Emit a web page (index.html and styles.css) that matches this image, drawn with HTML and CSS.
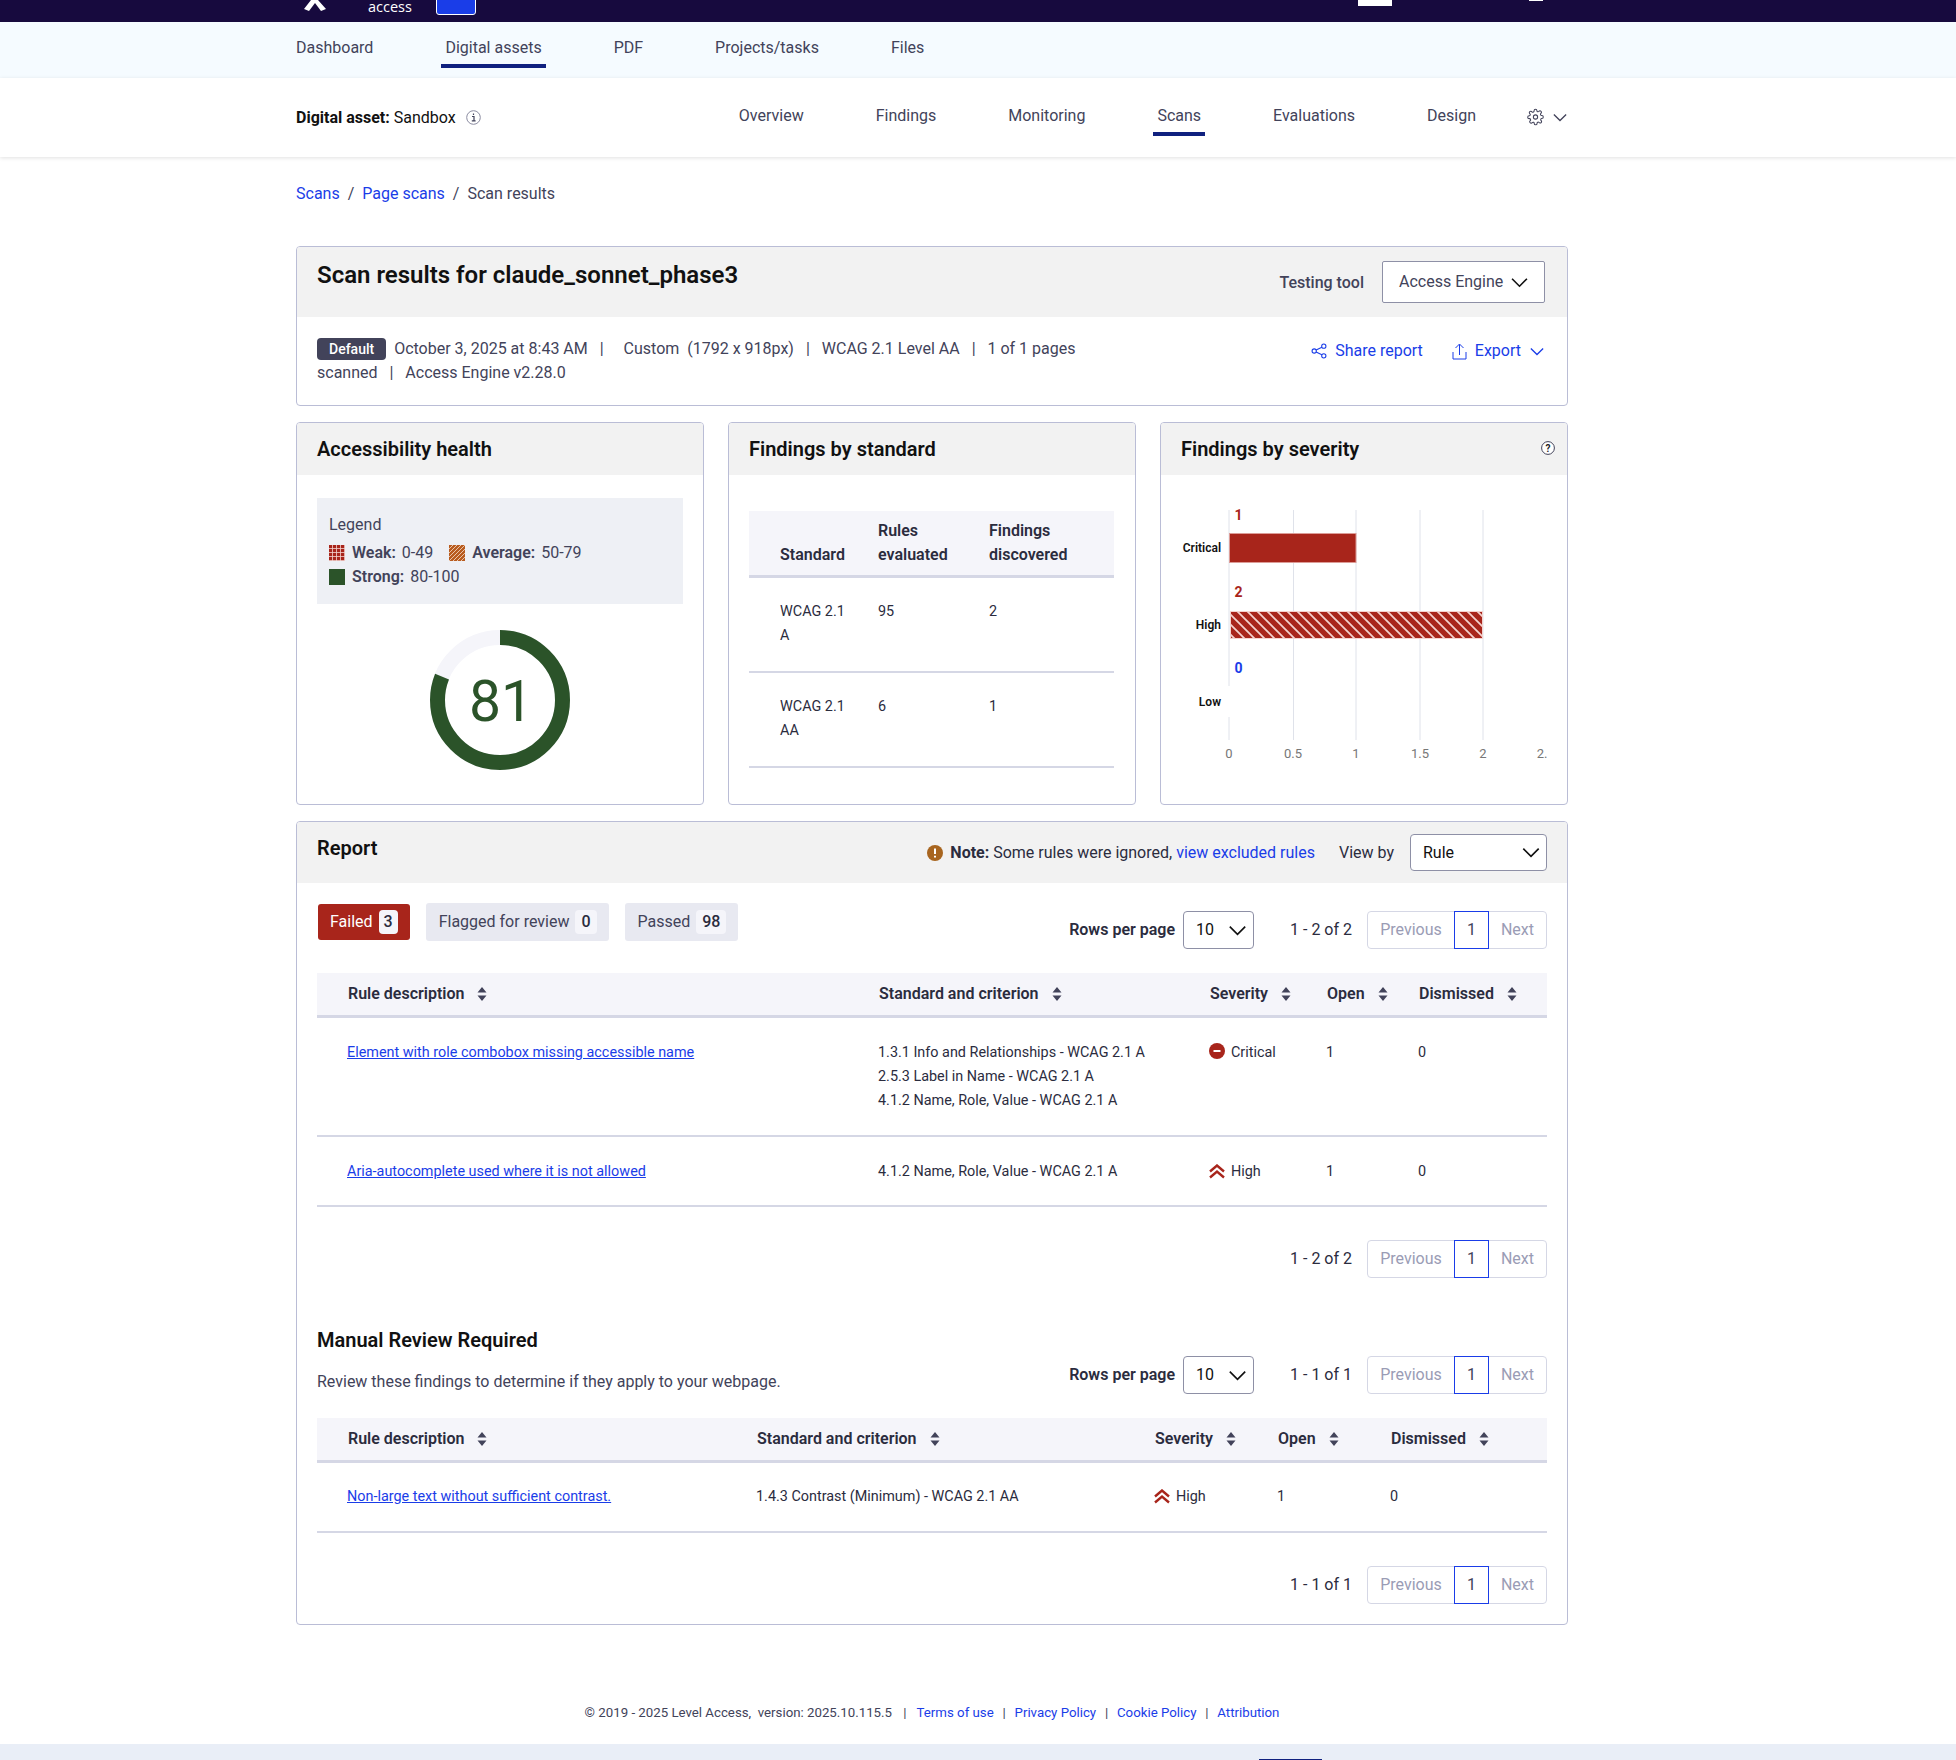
FILE: index.html
```html
<!DOCTYPE html>
<html lang="en">
<head>
    <meta charset="UTF-8">
    <title>Scan results</title>
    <link rel="stylesheet" href="styles.css">
</head>
<body>
<svg class="defs" width="0" height="0" aria-hidden="true">
    <defs>
        <symbol id="sort" viewBox="0 0 10 14"><path d="M5 0l4.500 5.500H.5zM5 14L.5 8.500h9z"/></symbol>
        <symbol id="chev" viewBox="0 0 16 10"><path d="M1 1.500l7 7 7-7" fill="none" stroke="currentColor" stroke-width="1.500"/></symbol>
        <symbol id="high" viewBox="0 0 16 15"><path d="M1 7.500L8 1.500l7 6M1 13.500l7-6 7 6" fill="none" stroke="#a8251b" stroke-width="2.400"/></symbol>
        <pattern id="hatch-high" patternUnits="userSpaceOnUse" width="10" height="10">
            <rect width="10" height="10" fill="#a8251b"/>
            <path d="M-1-1L11 11M-1 9L1 11M9-1L11 1" stroke="#f3d3cf" stroke-width="1.700"/>
        </pattern>
        <pattern id="hatch-weak" patternUnits="userSpaceOnUse" width="4" height="4">
            <rect width="4" height="4" fill="#a8251b"/>
            <path d="M3.500 0v4M0 3.500h4" stroke="#f3d3cf" stroke-width=".8"/>
        </pattern>
        <pattern id="hatch-avg" patternUnits="userSpaceOnUse" width="4" height="4">
            <rect width="4" height="4" fill="#b85c1f"/>
            <path d="M-1 1L1-1M-1 5L5-1M3 5L5 3" stroke="#f6e0cf" stroke-width=".8"/>
        </pattern>
    </defs>
</svg>

<header class="topbar">
    <svg class="logo-mark" width="22" height="11" viewBox="0 0 22 11"><path d="M7 0h7l8 9-5 2-6-8-6 8-5-2z" fill="#fff"/></svg>
    <span class="logo-text">access</span>
    <span class="top-btn"></span>
    <span class="top-box"></span>
    <span class="top-sliver"></span>
</header>

<nav class="subnav">
    <div class="wrap subnav-row">
        <a class="nav-link">Dashboard</a>
        <a class="nav-link active">Digital assets</a>
        <a class="nav-link">PDF</a>
        <a class="nav-link">Projects/tasks</a>
        <a class="nav-link">Files</a>
    </div>
</nav>

<nav class="assetnav">
    <div class="wrap assetnav-row">
        <div class="asset-name">
            <b>Digital asset:</b> Sandbox
            <svg class="info-icon" width="15" height="15" viewBox="0 0 15 15"><circle cx="7.500" cy="7.500" r="6.800" fill="none" stroke="#8a8ba0"/><path d="M6 6.500h2v4.200M5.800 10.800h3.800M7.500 3.500v1.500" fill="none" stroke="#42435a" stroke-width="1.200"/></svg>
        </div>
        <div class="asset-links">
            <a class="nav-link">Overview</a>
            <a class="nav-link">Findings</a>
            <a class="nav-link">Monitoring</a>
            <a class="nav-link active">Scans</a>
            <a class="nav-link">Evaluations</a>
            <a class="nav-link">Design</a>
        </div>
        <div class="asset-tools">
            <svg width="17" height="20" viewBox="0 0 24 24" fill="none" stroke="#42435a" stroke-width="1.500"><circle cx="12" cy="12" r="3"/><path d="M19.400 15a1.600 1.600 0 0 0 .3 1.800l.1.1a2 2 0 1 1-2.800 2.800l-.1-.1a1.600 1.600 0 0 0-2.700 1.100V21a2 2 0 1 1-4 0v-.1a1.600 1.600 0 0 0-2.700-1.100l-.1.100a2 2 0 1 1-2.800-2.800l.1-.1a1.600 1.600 0 0 0-1.100-2.700H3a2 2 0 1 1 0-4h.1a1.600 1.600 0 0 0 1.100-2.700l-.1-.1a2 2 0 1 1 2.800-2.800l.1.1a1.600 1.600 0 0 0 1.800.3H9a1.600 1.600 0 0 0 1-1.500V3a2 2 0 1 1 4 0v.1a1.600 1.600 0 0 0 2.700 1.100l.1-.1a2 2 0 1 1 2.800 2.800l-.1.1a1.600 1.600 0 0 0-.3 1.800V9a1.600 1.600 0 0 0 1.500 1H21a2 2 0 1 1 0 4h-.1a1.600 1.600 0 0 0-1.500 1z"/></svg>
            <svg class="tool-chev" width="14" height="9"><use href="#chev"/></svg>
        </div>
    </div>
</nav>

<main class="wrap">
    <div class="crumbs">
        <a>Scans</a><span class="sep">/</span><a>Page scans</a><span class="sep">/</span><span>Scan results</span>
    </div>

    <section class="card">
        <div class="card-head scan-head">
            <h1>Scan results for claude_sonnet_phase3</h1>
            <div class="tool-pick">
                <span class="strong-label tool-label">Testing tool</span>
                <span class="select tool-select">Access Engine <svg width="17" height="11"><use href="#chev"/></svg></span>
            </div>
        </div>
        <div class="scan-meta">
            <div class="meta-text">
                <div><span class="badge">Default</span> October 3, 2025 at 8:43 AM <i class="wide">|</i> Custom&nbsp; (1792 x 918px) <i>|</i> WCAG 2.1 Level AA <i>|</i> 1 of 1 pages</div>
                <div>scanned <i>|</i> Access Engine v2.28.0</div>
            </div>
            <div class="meta-actions">
                <a class="action">
                    <svg width="16" height="16" viewBox="0 0 15 15" fill="none" stroke="#1a3de8"><circle cx="3" cy="7.500" r="2"/><circle cx="12" cy="3" r="2"/><circle cx="12" cy="12" r="2"/><path d="M4.800 6.500l5.400-2.600M4.800 8.500l5.400 2.600"/></svg>
                    Share report
                </a>
                <a class="action">
                    <svg width="15" height="17" viewBox="0 0 15 17" fill="none" stroke="#1a3de8"><path d="M7.500 12V1.500M3.500 5l4-4 4 4M1 9v7h13V9"/></svg>
                    Export
                    <svg class="action-chev" width="14" height="9"><use href="#chev"/></svg>
                </a>
            </div>
        </div>
    </section>

    <div class="summary">
        <section class="card">
            <div class="card-head small-head"><h2>Accessibility health</h2></div>
            <div class="health-body">
                <div class="legend">
                    <div class="legend-title">Legend</div>
                    <div class="legend-row">
                        <svg width="16" height="16"><rect width="16" height="16" fill="url(#hatch-weak)"/></svg>
                        <b>Weak:</b> 0-49
                        <svg class="legend-gap" width="16" height="16"><rect width="16" height="16" fill="url(#hatch-avg)"/></svg>
                        <b>Average:</b> 50-79
                    </div>
                    <div class="legend-row">
                        <svg width="16" height="16"><rect width="16" height="16" fill="#2b5329"/></svg>
                        <b>Strong:</b> 80-100
                    </div>
                </div>
                <svg class="donut" width="140" height="140" viewBox="0 0 140 140">
                    <circle cx="70" cy="70" r="62.500" fill="none" stroke="#f5f5fa" stroke-width="15"/>
                    <circle cx="70" cy="70" r="62.500" fill="none" stroke="#2b5329" stroke-width="15" stroke-dasharray="318 393" transform="rotate(-90 70 70)"/>
                    <text x="71" y="91" text-anchor="middle" class="donut-num">81</text>
                </svg>
            </div>
        </section>

        <section class="card">
            <div class="card-head small-head"><h2>Findings by standard</h2></div>
            <div class="standard-body">
                <table class="grid standard-table">
                    <colgroup><col class="s1"><col class="s2"><col class="s3"></colgroup>
                    <thead><tr><th>Standard</th><th>Rules evaluated</th><th>Findings discovered</th></tr></thead>
                    <tbody>
                        <tr><td>WCAG 2.1 A</td><td>95</td><td>2</td></tr>
                        <tr><td>WCAG 2.1 AA</td><td>6</td><td>1</td></tr>
                    </tbody>
                </table>
            </div>
        </section>

        <section class="card">
            <div class="card-head small-head severity-head">
                <h2>Findings by severity</h2>
                <svg width="14" height="14" viewBox="0 0 14 14"><circle cx="7" cy="7" r="6.400" fill="#fff" stroke="#42435a"/><text x="7" y="10.500" text-anchor="middle" class="help-mark">?</text></svg>
            </div>
            <svg class="chart" width="406" height="320" viewBox="0 0 406 320">
                <g stroke="#dfe2ea">
                    <path d="M68 35V265M132.500 35V265M195 35V265M259 35V265M322 35V265"/>
                </g>
                <rect x="64" y="211" width="8" height="31" fill="#fff"/>
                <rect x="68.500" y="58.500" width="126.500" height="29" fill="#a8251b" stroke="#dc9c97"/>
                <rect x="69.500" y="136.500" width="252" height="27" fill="url(#hatch-high)" stroke="#f3d3cf"/>
                <g class="chart-cat" text-anchor="end">
                    <text x="60" y="77">Critical</text>
                    <text x="60" y="154">High</text>
                    <text x="60" y="231">Low</text>
                </g>
                <g class="chart-num">
                    <text x="73.500" y="45" fill="#a8251b">1</text>
                    <text x="73.500" y="122" fill="#a8251b">2</text>
                    <text x="73.500" y="198" fill="#1a3de8">0</text>
                </g>
                <g class="chart-axis" text-anchor="middle">
                    <text x="68" y="283">0</text>
                    <text x="132" y="283">0.5</text>
                    <text x="195" y="283">1</text>
                    <text x="259" y="283">1.5</text>
                    <text x="322" y="283">2</text>
                    <text x="381" y="283">2.</text>
                </g>
            </svg>
        </section>
    </div>

    <section class="card report">
        <div class="card-head report-head">
            <h2>Report</h2>
            <div class="report-tools">
                <svg width="16" height="16" viewBox="0 0 16 16"><circle cx="8" cy="8" r="8" fill="#a8651f"/><path d="M8 3.500v5.500M8 10.800v1.800" stroke="#fff" stroke-width="2"/></svg>
                <span class="note"><b>Note:</b> Some rules were ignored, <a>view excluded rules</a></span>
                <span class="view-label">View by</span>
                <span class="select view-select">Rule <svg width="18" height="11"><use href="#chev"/></svg></span>
            </div>
        </div>
        <div class="report-body">
            <div class="tabs-row">
                <div class="tabs">
                    <span class="tab failed">Failed <em>3</em></span>
                    <span class="tab">Flagged for review <em>0</em></span>
                    <span class="tab">Passed <em>98</em></span>
                </div>
                <div class="pager-row">
                    <span class="strong-label">Rows per page</span>
                    <span class="select rows-select">10 <svg width="19" height="11"><use href="#chev"/></svg></span>
                    <span class="count rows-count">1 - 2 of 2</span>
                    <div class="pager"><span>Previous</span><span class="current">1</span><span>Next</span></div>
                </div>
            </div>

            <table class="grid rules-table failed-table">
                <colgroup><col class="r1"><col class="r2"><col class="r3"><col class="r4"><col class="r5"></colgroup>
                <thead>
                    <tr>
                        <th>Rule description <svg class="sort" width="10" height="14"><use href="#sort"/></svg></th>
                        <th>Standard and criterion <svg class="sort" width="10" height="14"><use href="#sort"/></svg></th>
                        <th>Severity <svg class="sort" width="10" height="14"><use href="#sort"/></svg></th>
                        <th>Open <svg class="sort" width="10" height="14"><use href="#sort"/></svg></th>
                        <th>Dismissed <svg class="sort" width="10" height="14"><use href="#sort"/></svg></th>
                    </tr>
                </thead>
                <tbody>
                    <tr>
                        <td><a class="rule-link">Element with role combobox missing accessible name</a></td>
                        <td>1.3.1 Info and Relationships - WCAG 2.1 A<br>2.5.3 Label in Name - WCAG 2.1 A<br>4.1.2 Name, Role, Value - WCAG 2.1 A</td>
                        <td><span class="sev sev-critical"><svg width="16" height="16" viewBox="0 0 16 16"><circle cx="8" cy="8" r="8" fill="#a8251b"/><path d="M4.500 8h7" stroke="#fff" stroke-width="2"/></svg>Critical</span></td>
                        <td>1</td>
                        <td>0</td>
                    </tr>
                    <tr>
                        <td><a class="rule-link">Aria-autocomplete used where it is not allowed</a></td>
                        <td>4.1.2 Name, Role, Value - WCAG 2.1 A</td>
                        <td><span class="sev"><svg width="16" height="15"><use href="#high"/></svg>High</span></td>
                        <td>1</td>
                        <td>0</td>
                    </tr>
                </tbody>
            </table>
            <div class="pager-row pager-end">
                <span class="count">1 - 2 of 2</span>
                <div class="pager"><span>Previous</span><span class="current">1</span><span>Next</span></div>
            </div>

            <div class="review-head">
                <div>
                    <h2>Manual Review Required</h2>
                    <p class="review-text">Review these findings to determine if they apply to your webpage.</p>
                </div>
                <div class="pager-row">
                    <span class="strong-label">Rows per page</span>
                    <span class="select rows-select">10 <svg width="19" height="11"><use href="#chev"/></svg></span>
                    <span class="count rows-count">1 - 1 of 1</span>
                    <div class="pager"><span>Previous</span><span class="current">1</span><span>Next</span></div>
                </div>
            </div>

            <table class="grid rules-table manual-table">
                <colgroup><col class="m1"><col class="m2"><col class="m3"><col class="m4"><col class="m5"></colgroup>
                <thead>
                    <tr>
                        <th>Rule description <svg class="sort" width="10" height="14"><use href="#sort"/></svg></th>
                        <th>Standard and criterion <svg class="sort" width="10" height="14"><use href="#sort"/></svg></th>
                        <th>Severity <svg class="sort" width="10" height="14"><use href="#sort"/></svg></th>
                        <th>Open <svg class="sort" width="10" height="14"><use href="#sort"/></svg></th>
                        <th>Dismissed <svg class="sort" width="10" height="14"><use href="#sort"/></svg></th>
                    </tr>
                </thead>
                <tbody>
                    <tr>
                        <td><a class="rule-link">Non-large text without sufficient contrast.</a></td>
                        <td>1.4.3 Contrast (Minimum) - WCAG 2.1 AA</td>
                        <td><span class="sev"><svg width="16" height="15"><use href="#high"/></svg>High</span></td>
                        <td>1</td>
                        <td>0</td>
                    </tr>
                </tbody>
            </table>
            <div class="pager-row pager-end">
                <span class="count">1 - 1 of 1</span>
                <div class="pager"><span>Previous</span><span class="current">1</span><span>Next</span></div>
            </div>
        </div>
    </section>

    <footer class="foot">
        &copy; 2019 - 2025 Level Access,&nbsp; version: 2025.10.115.5 <i class="gap">|</i> <a>Terms of use</a> <i>|</i> <a>Privacy Policy</a> <i>|</i> <a>Cookie Policy</a> <i>|</i> <a>Attribution</a>
    </footer>
</main>

<div class="bottom-band"><span class="band-tab"></span></div>
</body>
</html>
```

FILE: styles.css
```css
html {
    height: 1760px;
    overflow: hidden;
}

body {
    margin: 0;
    height: 1760px;
    overflow: hidden;
    position: relative;
    font-family: Roboto, "Liberation Sans", sans-serif;
    font-size: 16px;
    line-height: 24px;
    color: #42435a;
    background: #fff;
}

a {
    color: #1a3de8;
}

b {
    font-weight: 500;
}

.defs {
    position: absolute;
}

.wrap {
    width: 1272px;
    margin-left: 296px;
}

/* top bar, cut off by the top of the shot */
.topbar {
    height: 22px;
    background: #170a3e;
    position: relative;
    overflow: hidden;
}

.logo-mark {
    position: absolute;
    left: 304px;
    top: 0;
}

.logo-text {
    position: absolute;
    left: 368px;
    top: 1px;
    font-family: "Open Sans", sans-serif;
    font-size: 14.500px;
    line-height: 12px;
    color: #fff;
}

.top-btn {
    position: absolute;
    left: 436px;
    top: -4px;
    width: 38px;
    height: 17px;
    background: #1a3de8;
    border: 1px solid #fff;
    border-radius: 3px;
}

.top-box {
    position: absolute;
    left: 1358px;
    top: 0;
    width: 34px;
    height: 6px;
    background: #fff;
}

.top-sliver {
    position: absolute;
    left: 1529px;
    top: 0;
    width: 14px;
    height: 1px;
    background: #fff;
}

/* navs */
.subnav {
    height: 56px;
    background: #f5fbff;
}

.subnav-row {
    display: flex;
    gap: 64px;
    height: 100%;
}

.nav-link {
    display: flex;
    align-items: center;
    padding: 0 4px;
    margin-left: -4px;
    margin-right: 4px;
    color: #42435a;
    border-bottom: 4px solid transparent;
    box-sizing: border-box;
}

.subnav-row .nav-link {
    height: 46px;
    padding-top: 10px;
}

.subnav-row .nav-link.active,
.asset-links .nav-link.active {
    border-bottom-color: #10217f;
}

.assetnav {
    height: 79px;
    background: #fff;
    box-shadow: 0 1px 4px rgba(0, 0, 0, .12);
    position: relative;
}

.assetnav-row {
    display: flex;
    align-items: flex-start;
    height: 100%;
}

.asset-name {
    margin-top: 28px;
    color: #111;
}

.asset-name b {
    font-weight: 700;
}

.info-icon {
    margin-left: 6px;
    vertical-align: -2px;
}

.asset-links {
    display: flex;
    gap: 64px;
    margin-left: auto;
    height: 58px;
}

.asset-links .nav-link {
    padding-top: 22px;
    padding-bottom: 0;
    height: 58px;
    box-sizing: border-box;
}

.asset-tools {
    display: flex;
    align-items: center;
    margin: 29px 1px 0 43px;
    height: 20px;
    color: #42435a;
}

.tool-chev {
    margin-left: 9px;
}

.crumbs {
    margin-top: 25px;
    height: 24px;
    margin-bottom: 40px;
}

.sep {
    margin: 0 8px;
}

/* cards */
.card {
    border: 1px solid #babdd6;
    border-radius: 4px;
    background: #fff;
    box-sizing: border-box;
    overflow: hidden;
}

.card-head {
    background: #f2f2f2;
    padding: 0 20px;
}

h1 {
    margin: 0;
    font-size: 24px;
    line-height: 32px;
    font-weight: 600;
    color: #111;
}

h2 {
    margin: 0;
    font-size: 20px;
    line-height: 28px;
    font-weight: 600;
    color: #111;
}

.scan-head {
    height: 70px;
    display: flex;
    justify-content: space-between;
    padding-top: 12px;
    box-sizing: border-box;
    padding-right: 22px;
}

.tool-pick {
    display: flex;
    align-items: center;
    gap: 18px;
    height: 42px;
    margin-top: 2px;
}

.strong-label {
    font-weight: 600;
    color: #2b2c3e;
}

.tool-label {
    font-weight: 500;
    color: #42435a;
    padding-top: 2px;
}

.select {
    display: flex;
    align-items: center;
    justify-content: space-between;
    box-sizing: border-box;
    background: #fff;
    border: 1px solid #8e90a6;
    border-radius: 2px;
    color: #111;
}

.tool-select {
    width: 163px;
    height: 42px;
    padding: 0 16px;
    color: #42435a;
}

.tool-select svg {
    color: #111;
}

.scan-meta {
    height: 88px;
    padding: 20px 23px 0 20px;
    box-sizing: border-box;
    display: flex;
    justify-content: space-between;
}

.meta-text {
    width: 800px;
}

.meta-text i {
    font-style: normal;
    margin: 0 8px;
}

.meta-text i.wide {
    margin-right: 16px;
}

.badge {
    display: inline-block;
    background: #42435a;
    color: #fff;
    font-size: 14px;
    font-weight: 500;
    line-height: 22px;
    padding: 0 12px;
    border-radius: 4px;
    margin-right: 4px;
}

.meta-actions {
    display: flex;
    gap: 29px;
    height: 24px;
    margin-top: 2px;
}

.action {
    display: flex;
    align-items: center;
    gap: 8px;
}

.action-chev {
    margin-left: 1px;
}

.summary {
    display: grid;
    grid-template-columns: 408px 408px 408px;
    gap: 24px;
    margin-top: 16px;
    height: 383px;
}

.small-head {
    height: 52px;
    display: flex;
    align-items: center;
    box-sizing: border-box;
}

.severity-head {
    justify-content: space-between;
    padding-right: 12px;
}

.severity-head svg {
    margin-top: -2px;
}

.help-mark {
    font-size: 10px;
    font-weight: 700;
    fill: #222;
}

.health-body {
    padding: 23px 20px 0;
    display: flex;
    flex-direction: column;
    align-items: center;
}

.legend {
    width: 100%;
    box-sizing: border-box;
    height: 106px;
    background: #eef0f5;
    padding: 15px 12px 0;
}

.legend-row {
    display: flex;
    align-items: center;
    gap: 7px;
}

.legend-title {
    height: 28px;
}

.legend-row b {
    font-weight: 600;
    margin-right: -1px;
}

.legend-gap {
    margin-left: 9px;
}

.donut {
    margin-top: 26px;
}

.donut-num {
    font-size: 57px;
    fill: #2b5329;
}

.standard-body {
    padding: 36px 21px 0 20px;
}

/* tables */
.grid {
    width: 100%;
    border-collapse: collapse;
    table-layout: fixed;
    font-size: 14.400px;
    line-height: 24px;
    color: #2b2c3e;
}

.grid th {
    background: #f5f5fa;
    border-bottom: 3px solid #d5d7e5;
    text-align: left;
    font-weight: 600;
    font-size: 16px;
    vertical-align: bottom;
    padding: 0;
    color: #2b2c3e;
}

.grid td {
    border-bottom: 2px solid #d5d7e5;
    padding: 0;
    vertical-align: top;
}

.standard-table th {
    padding: 8px 12px 8px 0;
}

.standard-table td {
    padding: 22px 16px 23px 0;
}

.standard-table th:first-child,
.standard-table td:first-child {
    padding-left: 31px;
    padding-right: 28px;
}

.s1 { width: 129px; }
.s2 { width: 111px; }

.rules-table th {
    height: 42px;
    vertical-align: middle;
    padding-left: 1px;
}

.rules-table td {
    padding-top: 22px;
    padding-bottom: 22px;
}

.failed-table td {
    padding-top: 23px;
}

.failed-table tr:last-child td {
    padding-bottom: 21px;
}

.rules-table th:first-child {
    padding-left: 31px;
}

.rules-table td:first-child {
    padding-left: 30px;
}

.r1 { width: 561px; }
.r2 { width: 331px; }
.r3 { width: 117px; }
.r4 { width: 92px; }

.m1 { width: 439px; }
.m2 { width: 398px; }
.m3 { width: 123px; }
.m4 { width: 113px; }

.sort {
    fill: #42435a;
    margin-left: 9px;
    vertical-align: -2px;
}

.rule-link {
    text-decoration: underline;
}

.sev {
    display: flex;
    align-items: center;
    gap: 6px;
}

.sev svg {
    margin-top: -2px;
}

.sev-critical svg {
    margin-top: -4px;
}

.chart {
    display: block;
    font-family: Roboto, sans-serif;
}

.chart-cat {
    font-size: 12px;
    font-weight: 600;
    fill: #111;
}

.chart-num {
    font-size: 14px;
    font-weight: 700;
}

.chart-axis {
    font-size: 13px;
    fill: #777;
}

/* report */
.report {
    margin-top: 16px;
    height: 804px;
}

.report-head {
    height: 61px;
    display: flex;
    justify-content: space-between;
    padding-top: 12px;
    padding-right: 20px;
    box-sizing: border-box;
}

.report-tools {
    display: flex;
    align-items: center;
    height: 37px;
}

.note {
    margin-left: 7px;
    color: #2b2c3e;
}

.note b {
    font-weight: 700;
}

.view-label {
    margin-left: 24px;
    color: #2b2c3e;
}

.view-select {
    width: 137px;
    height: 37px;
    margin-left: 16px;
    padding: 0 6px 0 12px;
    border-radius: 4px;
}

.report-body {
    padding: 20px 20px 0;
}

.tabs-row {
    display: flex;
    justify-content: space-between;
    align-items: flex-start;
    height: 46px;
    margin-bottom: 24px;
}

.tabs {
    display: flex;
    gap: 16px;
    padding-left: 1px;
}

.tab {
    display: flex;
    align-items: center;
    height: 38px;
    padding: 0 12px 0 13px;
    box-sizing: border-box;
    background: #e8e9f1;
    border-radius: 3px;
    font-size: 16px;
    gap: 6px;
    color: #42435a;
}

.tab em {
    font-style: normal;
    font-weight: 500;
    background: #f5f5fa;
    color: #2b2c3e;
    padding: 0 6px;
    border-radius: 4px;
    line-height: 24px;
}

.tab.failed {
    background: #a8251b;
    color: #fff;
    padding: 0 12px 0 12px;
    height: 36px;
    margin-top: 1px;
}

.tab.failed em {
    padding: 0 5px;
}

.pager-row {
    display: flex;
    align-items: center;
    justify-content: flex-end;
    margin-top: 8px;
}

.rows-select {
    width: 71px;
    height: 38px;
    margin-left: 8px;
    padding: 0 6px 0 12px;
    border-radius: 4px;
}

.count {
    margin-right: 15px;
    color: #2b2c3e;
}

.rows-count {
    margin-left: 36px;
}

.pager {
    display: flex;
    height: 38px;
    width: 180px;
    box-sizing: border-box;
    border: 1px solid #d5d7e5;
    border-radius: 4px;
    color: #9a9cb5;
    align-items: stretch;
}

.pager span {
    display: flex;
    align-items: center;
    justify-content: center;
}

.pager span:first-child {
    width: 86px;
}

.pager span:last-child {
    flex: 1;
}

.pager .current {
    width: 35px;
    margin: -1px 0;
    border: 1px solid #1a3de8;
    color: #42435a;
    box-sizing: border-box;
}

.pager-end {
    margin-top: 33px;
}

.review-head {
    display: flex;
    justify-content: space-between;
    align-items: flex-end;
    margin-top: 48px;
    margin-bottom: 24px;
}

.review-text {
    margin: 16px 0 0;
}

/* footer */
.foot {
    position: absolute;
    left: 0;
    right: 92px;
    top: 1703px;
    text-align: center;
    font-size: 13.250px;
    line-height: 20px;
}

.foot i {
    font-style: normal;
    margin: 0 5.500px;
}

.foot i.gap {
    margin: 0 7px 0 8px;
}

.bottom-band {
    position: absolute;
    left: 0;
    right: 0;
    top: 1744px;
    height: 16px;
    background: #e9eef7;
}

.band-tab {
    position: absolute;
    left: 1259px;
    top: 15px;
    width: 63px;
    height: 1px;
    background: #10217f;
}
```
